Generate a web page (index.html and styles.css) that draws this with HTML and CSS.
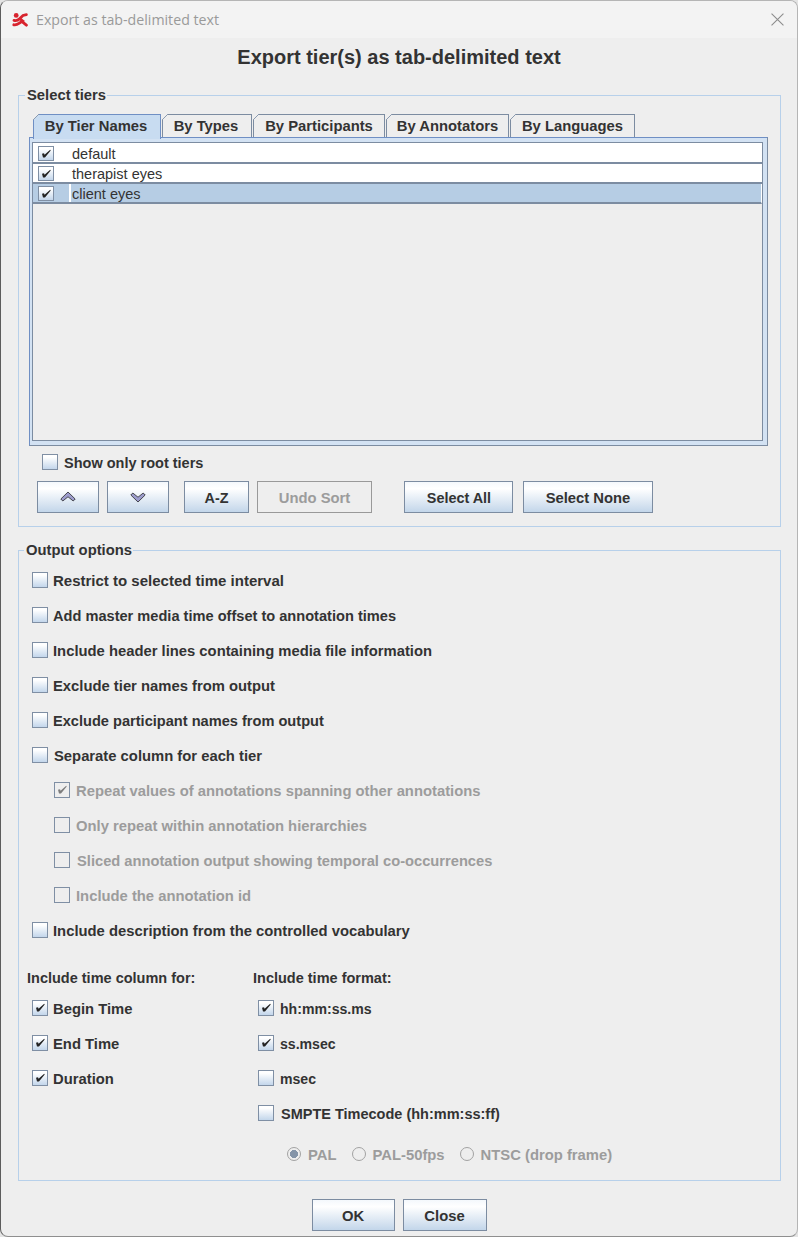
FILE: index.html
```html
<!DOCTYPE html>
<html lang="en">
<head>
<meta charset="utf-8">
<title>Export as tab-delimited text</title>
<link rel="stylesheet" href="styles.css">
</head>
<body>
<svg class="defs" width="0" height="0" aria-hidden="true">
  <symbol id="tick" viewBox="0 0 14 14">
    <path d="M3 6.800L5 6.300l.6 1.500 5.600-5 .5.600L6 10.600H4z" fill="#222"/>
  </symbol>
</svg>
<div class="window">
  <header class="titlebar">
    <svg class="logo" viewBox="0 0 16 16" width="16" height="16" aria-hidden="true">
      <circle cx="4.200" cy="3.400" r="2.400" fill="#d8242e"/>
      <path d="M2 8.400c2.500.6 4.200-.2 5.600-1.700L11 3.500l3.400-.8M7.600 6.700l3 2.200-3.200 2.300c-1.600 1.100-3.600 2.200-5.600 1.600M10 9.700l4.400 3.500" fill="none" stroke="#d8242e" stroke-width="2.800" stroke-linecap="round"/>
    </svg>
    <span class="title-text">Export as tab-delimited text</span>
    <svg class="close-x" viewBox="0 0 12 12" width="13" height="13" aria-hidden="true">
      <path d="M.5.500l11 11M11.500.500l-11 11" stroke="#8c8c8c" stroke-width="1" fill="none"/>
    </svg>
  </header>

  <h1 class="heading">Export tier(s) as tab-delimited text</h1>

  <fieldset class="group group-tiers">
    <legend class="legend">Select tiers</legend>
    <div class="tabs">
      <div class="tab tab-active tab-1">By Tier Names</div>
      <div class="tab tab-2">By Types</div>
      <div class="tab tab-3">By Participants</div>
      <div class="tab tab-4">By Annotators</div>
      <div class="tab tab-5">By Languages</div>
    </div>
    <div class="tab-panel">
      <div class="tier-list">
        <div class="tier-row"><span class="box box-row"><svg class="tick"><use href="#tick"/></svg></span><span class="tier-name">default</span></div>
        <div class="tier-row"><span class="box box-row"><svg class="tick"><use href="#tick"/></svg></span><span class="tier-name">therapist eyes</span></div>
        <div class="tier-row tier-selected"><span class="box box-row"><svg class="tick"><use href="#tick"/></svg></span><span class="tier-name">client eyes</span></div>
      </div>
    </div>
    <label class="root-only"><span class="box"></span><span class="txt">Show only root tiers</span></label>
    <div class="tool-row">
      <button class="btn btn-up" type="button" aria-label="Move up">
        <svg viewBox="0 0 16 12" width="16" height="12" aria-hidden="true"><path d="M.8 8L8 1l7.200 7-2 2L8 5.800 2.800 10z" fill="#9c9ccc" stroke="#111" stroke-width=".7"/></svg>
      </button>
      <button class="btn btn-down" type="button" aria-label="Move down">
        <svg viewBox="0 0 16 12" width="16" height="12" aria-hidden="true"><path d="M.8 4L8 11l7.200-7-2-2L8 6.200 2.800 2z" fill="#9c9ccc" stroke="#111" stroke-width=".7"/></svg>
      </button>
      <button class="btn btn-az" type="button"><span class="txt">A-Z</span></button>
      <button class="btn btn-undo" type="button" disabled><span class="txt">Undo Sort</span></button>
      <button class="btn btn-all" type="button"><span class="txt">Select All</span></button>
      <button class="btn btn-none" type="button"><span class="txt">Select None</span></button>
    </div>
  </fieldset>

  <fieldset class="group group-output">
    <legend class="legend legend-output">Output options</legend>
    <label class="opt wide"><span class="box"></span><span class="txt">Restrict to selected time interval</span></label>
    <label class="opt tight"><span class="box"></span><span class="txt">Add master media time offset to annotation times</span></label>
    <label class="opt"><span class="box"></span><span class="txt">Include header lines containing media file information</span></label>
    <label class="opt"><span class="box"></span><span class="txt">Exclude tier names from output</span></label>
    <label class="opt tight"><span class="box"></span><span class="txt">Exclude participant names from output</span></label>
    <label class="opt gap-6"><span class="box"></span><span class="txt">Separate column for each tier</span></label>
    <label class="opt sub gap-6"><span class="box box-off"><svg class="tick tick-off"><use href="#tick"/></svg></span><span class="txt">Repeat values of annotations spanning other annotations</span></label>
    <label class="opt sub gap-6"><span class="box box-off"></span><span class="txt">Only repeat within annotation hierarchies</span></label>
    <label class="opt sub gap-7 slim"><span class="box box-off"></span><span class="txt">Sliced annotation output showing temporal co-occurrences</span></label>
    <label class="opt sub gap-6"><span class="box box-off"></span><span class="txt">Include the annotation id</span></label>
    <label class="opt"><span class="box"></span><span class="txt">Include description from the controlled vocabulary</span></label>

    <div class="time-grid">
      <div class="time-col">
        <div class="time-head">Include time column for:</div>
        <label class="opt"><span class="box"><svg class="tick"><use href="#tick"/></svg></span><span class="txt">Begin Time</span></label>
        <label class="opt"><span class="box"><svg class="tick"><use href="#tick"/></svg></span><span class="txt">End Time</span></label>
        <label class="opt"><span class="box"><svg class="tick"><use href="#tick"/></svg></span><span class="txt">Duration</span></label>
      </div>
      <div class="time-col">
        <div class="time-head">Include time format:</div>
        <label class="opt gap-6 fmt"><span class="box"><svg class="tick"><use href="#tick"/></svg></span><span class="txt">hh:mm:ss.ms</span></label>
        <label class="opt gap-6 fmt"><span class="box"><svg class="tick"><use href="#tick"/></svg></span><span class="txt">ss.msec</span></label>
        <label class="opt gap-6 fmt"><span class="box"></span><span class="txt">msec</span></label>
        <label class="opt gap-7 smpte"><span class="box"></span><span class="txt">SMPTE Timecode (hh:mm:ss:ff)</span></label>
        <div class="radio-row">
          <label class="radio"><span class="dot dot-on"></span><span class="txt">PAL</span></label>
          <label class="radio"><span class="dot"></span><span class="txt">PAL-50fps</span></label>
          <label class="radio"><span class="dot"></span><span class="txt">NTSC (drop frame)</span></label>
        </div>
      </div>
    </div>
  </fieldset>

  <div class="actions">
    <button class="btn btn-ok" type="button"><span class="txt">OK</span></button>
    <button class="btn btn-close" type="button"><span class="txt">Close</span></button>
  </div>
</div>
</body>
</html>
```

FILE: styles.css
```css
* { box-sizing: border-box; }

html, body {
  margin: 0;
  height: 100%;
  background: #e4e4e4;
}

body {
  font: bold 14.8px/16px "Liberation Sans", Arial, sans-serif;
  color: #333;
  overflow: hidden;
}

.defs { position: absolute; }

.txt { margin-top: 2px; }

.window {
  height: 1237px;
  background: #eeeeee;
  border: 1px solid #b5b5b5;
  border-left-color: #5c5c5c;
  border-bottom-color: #8f8f8f;
  border-radius: 8px;
  overflow: hidden;
}

.titlebar {
  height: 37px;
  background: #f3f3f3;
  display: flex;
  align-items: center;
  padding: 0 13px 0 11px;
}

.logo { flex: none; margin-top: 1px; }

.title-text {
  margin-left: 8px;
  font: 400 14.2px/18px "Open Sans", sans-serif;
  color: #9a9a9a;
  flex: 1;
}

.close-x { flex: none; }

.heading {
  margin: 9px 0 20px;
  font: bold 20px/20px "Liberation Sans", Arial, sans-serif;
  color: #333;
  text-align: center;
}

.group {
  margin: 0 16px 0 17px;
  padding: 11px 12px 13px 10px;
  border: 1px solid #b7d0ea;
  min-width: 0;
}

.legend {
  padding: 0 1px 0 2px;
  margin-left: -4px;
  line-height: 16px;
}

.legend-output { margin-left: -3px; }

.tabs {
  display: flex;
  height: 23px;
  padding-left: 4px;
  gap: 1px;
  position: relative;
  z-index: 1;
}

.tab {
  position: relative;
  height: 23px;
  border: 1px solid #7c8ca1;
  border-bottom: 0;
  text-align: center;
  line-height: 23px;
  background: #eeeeee;
}

.tab::before {
  content: "";
  position: absolute;
  left: -1px;
  top: -1px;
  width: 6px;
  height: 6px;
  background: linear-gradient(135deg, #eeeeee 0 44%, #8b9bb0 44% 58%, transparent 58%);
}

.tab-active {
  height: 25px;
  background: #c8dcf1;
  border-color: #6f8fc4;
  border-bottom: 0;
}

.tab-1 { width: 128px; padding-right: 2px; }
.tab-2 { width: 90px; padding-right: 2px; }
.tab-3 { width: 132px; }
.tab-4 { width: 123px; }
.tab-5 { width: 125px; }

.tab-panel {
  height: 309px;
  padding: 4px 4px 4px 2px;
  border: 1px solid #6f8fc4;
  border-bottom-color: #7c8ca1;
  border-right-color: #7c8ca1;
  background: #d3e2f3;
}

.tier-list {
  height: 100%;
  border: 1px solid #7c8ca1;
  background: #eeeeee;
}

.tier-row {
  height: 20px;
  display: flex;
  align-items: flex-start;
  background: #fff;
  border-bottom: 2px solid #7c8ca1;
  padding: 2px 0 0 5px;
  font-weight: 400;
  font-size: 14.5px;
}

.tier-row:first-child {
  height: 21px;
  padding-top: 3px;
}

.tier-name {
  margin-left: 18px;
  line-height: 16px;
}

.tier-selected {
  background: #b6cde4;
  border-right: 1px solid #fff;
}

.tier-selected .tier-name {
  border-left: 2px solid #fff;
  margin: -2px 0 0 15px;
  padding: 2px 0 0 1px;
  height: 18px;
}

.box {
  flex: none;
  width: 16px;
  height: 16px;
  display: inline-flex;
  align-items: center;
  justify-content: center;
  border: 1px solid #7f8fa4;
  background: linear-gradient(#ffffff 0 15%, #c3d6eb 100%);
}

.box-row { height: 15px; }

.box-off {
  background: #eeeeee;
}

.tick {
  width: 14px;
  height: 14px;
  display: block;
  flex: none;
}

.tick-off { opacity: .55; }

.root-only {
  height: 16px;
  display: flex;
  align-items: center;
  gap: 6px;
  margin: 8px 0 0 13px;
  font-size: 14.5px;
}

.tool-row {
  display: flex;
  margin: 11px 0 0 8px;
}

.btn {
  height: 32px;
  padding: 0;
  display: inline-flex;
  align-items: center;
  justify-content: center;
  border: 1px solid #7c8ca1;
  background: linear-gradient(#f4f8fc 0, #ffffff 22%, #c3d6ea 100%);
  font: bold 14.8px/16px "Liberation Sans", Arial, sans-serif;
  color: #333;
}

.btn:disabled {
  background: #eeeeee;
  border-color: #999;
  color: #9c9c9c;
}

.btn-up { width: 62px; }
.btn-down { width: 62px; margin-left: 8px; }
.btn-az { width: 65px; margin-left: 15px; font-size: 14.4px; }
.btn-undo { width: 115px; margin-left: 8px; }
.btn-all { width: 109px; margin-left: 32px; font-size: 14.4px; padding-left: 1px; }
.btn-none { width: 130px; margin-left: 10px; }

.group-output {
  margin-top: 15px;
  padding: 4px 12px 18px 8px;
}

.opt {
  height: 35px;
  display: flex;
  align-items: center;
  gap: 5px;
  padding-left: 5px;
}

.gap-6 { gap: 6px; }
.gap-7 { gap: 7px; }

.wide { font-size: 15px; }
.tight { font-size: 14.6px; }
.slim { font-size: 14.7px; }
.fmt { font-size: 14.1px; }
.smpte { font-size: 14.5px; }

.sub {
  padding-left: 27px;
  color: #9c9c9c;
}

.time-grid {
  display: grid;
  grid-template-columns: 226px 1fr;
  margin-top: 23px;
}

.time-head {
  height: 16px;
  margin: 0 0 4px;
  font-size: 14.5px;
}

.radio-row {
  display: flex;
  height: 16px;
  margin: 16px 0 0 34px;
  color: #9c9c9c;
}

.radio {
  display: flex;
  align-items: center;
  gap: 7px;
  margin-right: 15px;
}

.dot {
  flex: none;
  width: 14px;
  height: 14px;
  border: 1px solid #a2a2a2;
  border-radius: 50%;
  display: inline-block;
}

.dot-on {
  background: radial-gradient(circle, #8494a8 0 3.8px, #eeeeee 4.3px);
}

.actions {
  display: flex;
  justify-content: center;
  gap: 8px;
  margin-top: 18px;
}

.btn-ok { width: 83px; }
.btn-close { width: 84px; }
```
